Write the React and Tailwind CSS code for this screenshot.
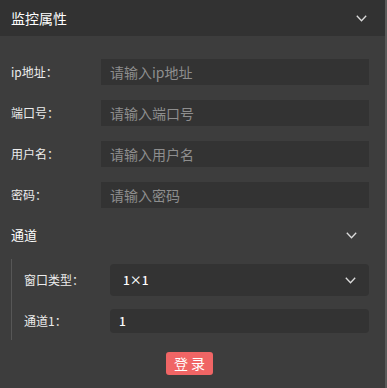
import React from "react";

const font = { fontFamily: '"Microsoft YaHei", "Noto Sans CJK SC", "Liberation Sans", sans-serif' };

function Chevron({ className = "" }) {
  return (
    <svg width="11" height="7" viewBox="0 0 11 7" className={className} fill="none">
      <path d="M0.8 0.8 L5.5 5.8 L10.2 0.8" stroke="#dcdcdc" strokeWidth="1.3" />
    </svg>
  );
}

function Row({ label, placeholder }) {
  return (
    <div className="flex items-center h-[26px] mb-[15px]">
      <div className="w-[101px] pl-[11px] text-[12px] text-[#ececec]">{label}</div>
      <div className="w-[268px] h-[26px] bg-[#333333] flex items-center pl-[9px] text-[14px] text-[#8e8e8e]">
        {placeholder}
      </div>
    </div>
  );
}

export default function App() {
  return (
    <div className="w-[387px] h-[388px] bg-[#3d3d3d] border-r-[2px] border-[#5a5a5a] overflow-hidden" style={font}>
      <div className="h-[36px] bg-[#323232] flex items-center justify-between pl-[11px] pr-[18px]">
        <span className="text-[14px] text-white">监控属性</span>
        <Chevron />
      </div>
      <div className="pt-[23px]">
        <Row label="ip地址：" placeholder="请输入ip地址" />
        <Row label="端口号：" placeholder="请输入端口号" />
        <Row label="用户名：" placeholder="请输入用户名" />
        <Row label="密码：" placeholder="请输入密码" />
      </div>
      <div className="flex items-center justify-between h-[24px] mt-[3px] pl-[11px] pr-[28px]">
        <span className="text-[13px] text-white">通道</span>
        <Chevron />
      </div>
      <div className="ml-[11px] mt-[12px] border-l border-[#575757] pt-[5px] pb-[7px]">
        <div className="flex items-center">
          <div className="w-[98px] pl-[12px] text-[12px] text-[#ececec]">窗口类型：</div>
          <div className="w-[259px] h-[32px] bg-[#333333] rounded-[4px] flex items-center justify-between pl-[13px] pr-[13px]">
            <span className="text-[12px] text-white font-medium">1×1</span>
            <Chevron />
          </div>
        </div>
        <div className="flex items-center mt-[13px]">
          <div className="w-[98px] pl-[12px] text-[12px] text-[#ececec]">通道1：</div>
          <div className="w-[259px] h-[24px] bg-[#333333] rounded-[4px] flex items-center pl-[9px]">
            <span className="text-[12px] text-white font-medium">1</span>
          </div>
        </div>
      </div>
      <div className="pl-[166px] mt-[12px]">
        <button className="w-[47px] h-[23px] bg-[#f06565] rounded-[3px] text-white text-[14px] flex items-center justify-center tracking-[3px] pl-[3px]">
          登录
        </button>
      </div>
    </div>
  );
}
